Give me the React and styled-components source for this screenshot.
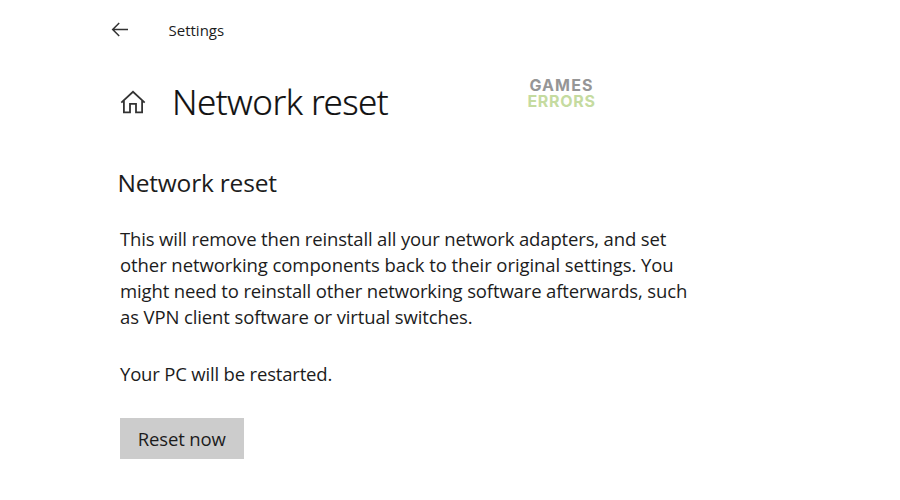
import styled, { createGlobalStyle } from 'styled-components';

const description = [
    { text: 'This will remove then reinstall all your network adapters, and set', spacing: -0.15 },
    { text: 'other networking components back to their original settings. You', spacing: -0.075 },
    { text: 'might need to reinstall other networking software afterwards, such', spacing: -0.14 },
    { text: 'as VPN client software or virtual switches.', spacing: -0.12 },
];

export default function App () {
    return (
        <StyledPage>
            <GlobalStyle />
            <StyledTopBar>
                <BackIcon />
                <StyledAppName>Settings</StyledAppName>
            </StyledTopBar>
            <StyledHeader>
                <HomeIcon />
                <StyledTitle>Network reset</StyledTitle>
                <StyledLogo>
                    <StyledLogoLine $color="#969696" $spacing={1.1}>GAMES</StyledLogoLine>
                    <StyledLogoLine $color="#c5dba0" $spacing={0.7}>ERRORS</StyledLogoLine>
                </StyledLogo>
            </StyledHeader>
            <StyledSubtitle>Network reset</StyledSubtitle>
            <StyledParagraph>
                {
                    description.map(line => (
                        <StyledLine key={line.text} $spacing={line.spacing}>{line.text}</StyledLine>
                    ))
                }
            </StyledParagraph>
            <StyledParagraph>
                <StyledLine $spacing={-0.18}>Your PC will be restarted.</StyledLine>
            </StyledParagraph>
            <StyledButton type="button">Reset now</StyledButton>
        </StyledPage>
    )
}

const BackIcon = () => (
    <svg width="18" height="16" viewBox="0 0 18 16" fill="none" stroke="#333" strokeWidth="1.5">
        <path d="M17 8.5H1.8M8.2 2L1.7 8.5L8.2 15" />
    </svg>
)

const HomeIcon = () => (
    <svg width="26" height="24" viewBox="0 0 26 24" fill="none" stroke="#333" strokeWidth="1.8">
        <path d="M1.3 12.6L13 1.8L24.7 12.6" />
        <path d="M3.9 10.4V22.3H10V13.8H16V22.3H22.1V10.4" />
    </svg>
)

const GlobalStyle = createGlobalStyle`
    body {
        margin: 0;
        background-color: #fff;
    }
`

const StyledPage = styled.div`
    box-sizing: border-box;
    height: 500px;
    width: 900px;
    padding: 18px 0 0 111px;
    overflow: hidden;
    color: #1c1c1c;
    font-family: "Open Sans", "Noto Sans", sans-serif;
`

const StyledTopBar = styled.div`
    display: flex;
    align-items: center;
    height: 24px;
    svg {
        margin-top: -3px;
    }
`

const StyledAppName = styled.span`
    margin-left: 39.5px;
    font-size: 15px;
    line-height: 24px;
`

const StyledHeader = styled.div`
    display: flex;
    align-items: center;
    height: 50px;
    margin-top: 35px;
    padding-left: 9px;
`

const StyledTitle = styled.h1`
    width: 220px;
    margin: 0 0 0 26px;
    color: #111;
    font-family: "Noto Sans", "Open Sans", sans-serif;
    font-size: 35px;
    font-weight: 300;
    letter-spacing: -0.55px;
    line-height: 50px;
    white-space: nowrap;
    -webkit-text-stroke: 0.2px #111;
`

const StyledLogo = styled.div`
    display: flex;
    flex-direction: column;
    align-items: center;
    width: 70px;
    margin: -17px 0 0 134.5px;
    font-family: "Inter", sans-serif;
    font-size: 16px;
    font-weight: 700;
    line-height: 15.5px;
`

const StyledLogoLine = styled.span`
    color: ${props => props.$color};
    letter-spacing: ${props => props.$spacing}px;
`

const StyledSubtitle = styled.h2`
    margin: 39px 0 0 6.5px;
    font-size: 24.5px;
    font-weight: 400;
    letter-spacing: -0.2px;
    line-height: 34px;
`

const StyledParagraph = styled.p`
    margin: 26px 0 0 9px;
    font-size: 18.5px;
    line-height: 25.85px;
    & + & {
        margin-top: 32px;
    }
`

const StyledLine = styled.span`
    display: block;
    letter-spacing: ${props => props.$spacing}px;
    white-space: nowrap;
`

const StyledButton = styled.button`
    display: block;
    height: 41px;
    width: 123.5px;
    margin: 30.5px 0 0 9px;
    padding: 0;
    border: none;
    background-color: #ccc;
    color: inherit;
    font-family: inherit;
    font-size: 18.5px;
    letter-spacing: -0.15px;
    line-height: 41px;
`
